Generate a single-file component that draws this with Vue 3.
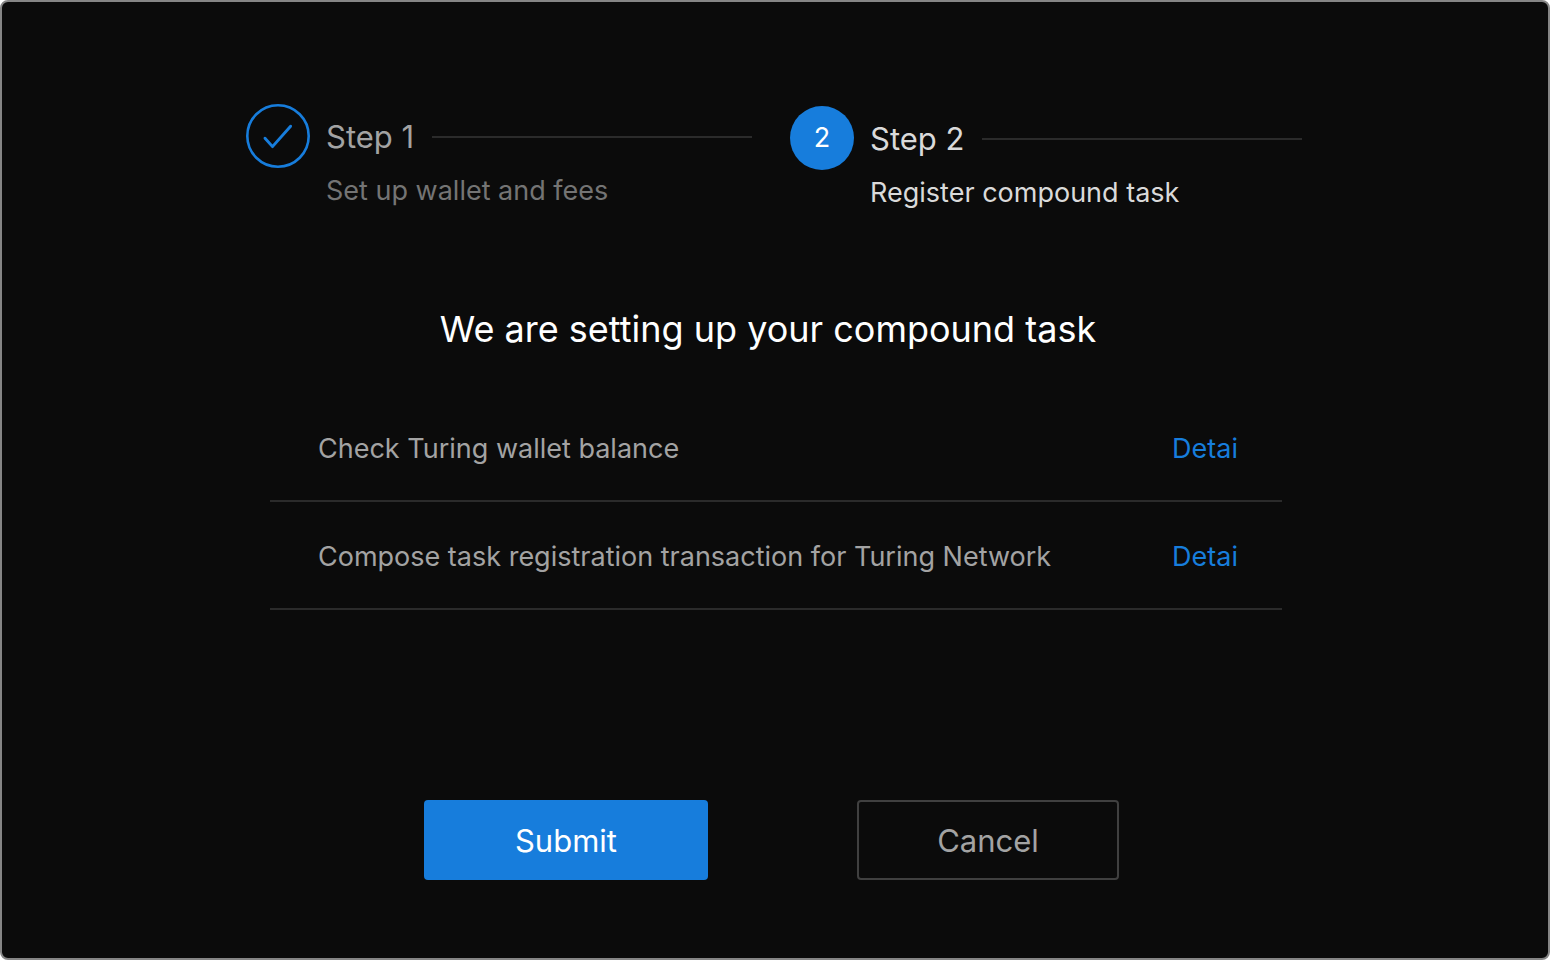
<script setup>
const tasks = [
  'Check Turing wallet balance',
  'Compose task registration transaction for Turing Network',
]
</script>

<template>
  <main class="dialog">
    <ol class="steps">
      <li class="step done">
        <span class="badge">
          <svg viewBox="0 0 64 64" width="64" height="64" aria-hidden="true">
            <circle cx="32" cy="32" r="30.7" fill="none" stroke="#177ddc" stroke-width="2.6" />
            <path d="M19 34.2 L26.5 42.6 L44.6 22.2" fill="none" stroke="#177ddc" stroke-width="2.9" stroke-linecap="round" stroke-linejoin="round" />
          </svg>
        </span>
        <div class="body">
          <div class="title">Step 1</div>
          <div class="desc">Set up wallet and fees</div>
        </div>
      </li>
      <li class="step current" aria-current="step">
        <span class="badge">2</span>
        <div class="body">
          <div class="title">Step 2</div>
          <div class="desc">Register compound task</div>
        </div>
      </li>
    </ol>
    <h1>We are setting up your compound task</h1>
    <ul class="tasks">
      <li v-for="task in tasks" :key="task">
        <span>{{ task }}</span>
        <a href="#">Detai</a>
      </li>
    </ul>
    <div class="actions">
      <button type="button" class="submit">Submit</button>
      <button type="button" class="cancel">Cancel</button>
    </div>
  </main>
</template>

<style>
body { background: #fff; }
</style>

<style scoped>
.dialog {
  box-sizing: border-box;
  min-height: 100vh;
  border: 2px solid #868686;
  border-radius: 8px;
  background: #0b0b0b;
  color: #fff;
  font-family: Inter, sans-serif;
  display: flex;
  flex-direction: column;
  align-items: center;
  padding: 102px 20px 78px;
}
ol, ul, h1 { margin: 0; padding: 0; list-style: none; }
.steps { display: flex; gap: 38px; width: 100%; max-width: 1056px; margin-right: 2px; }
.step { display: flex; gap: 16px; width: 506px; }
.current { width: 512px; padding-top: 2px; }
.badge {
  flex: none;
  width: 64px;
  height: 64px;
  border-radius: 50%;
  text-align: center;
  font-size: 27px;
  line-height: 64px;
}
.badge svg { display: block; }
.current .badge { background: #177ddc; }
.body { flex: 1; white-space: nowrap; }
.title {
  display: flex;
  align-items: center;
  gap: 18px;
  font-size: 31px;
  line-height: 66px;
}
.title::after { content: ""; flex: 1; height: 2px; background: #2b2b2b; }
.desc { font-size: 27px; line-height: 42px; }
.done .title { color: #a3a3a3; }
.done .desc { color: #747474; }
.current .title, .current .desc { color: #dadada; }
h1 { margin: 90px 14px 0 0; font-size: 36px; font-weight: 400; line-height: 50px; }
.tasks { width: 100%; max-width: 1012px; margin: 40px 0 0 2px; }
.tasks li {
  box-sizing: border-box;
  height: 108px;
  display: flex;
  justify-content: space-between;
  align-items: center;
  padding: 2px 44px 0 48px;
  border-bottom: 2px solid #2b2b2b;
  color: #a3a3a3;
  font-size: 27px;
}
a { color: #177ddc; text-decoration: none; }
.actions { display: flex; gap: 149px; margin: auto 7px 0 0; }
button {
  box-sizing: border-box;
  height: 80px;
  border-radius: 4px;
  font: 31px Inter, sans-serif;
}
.submit { width: 284px; border: 0; background: #177ddc; color: #fff; }
.cancel { width: 262px; border: 2px solid #404040; background: transparent; color: #a3a3a3; }
</style>
